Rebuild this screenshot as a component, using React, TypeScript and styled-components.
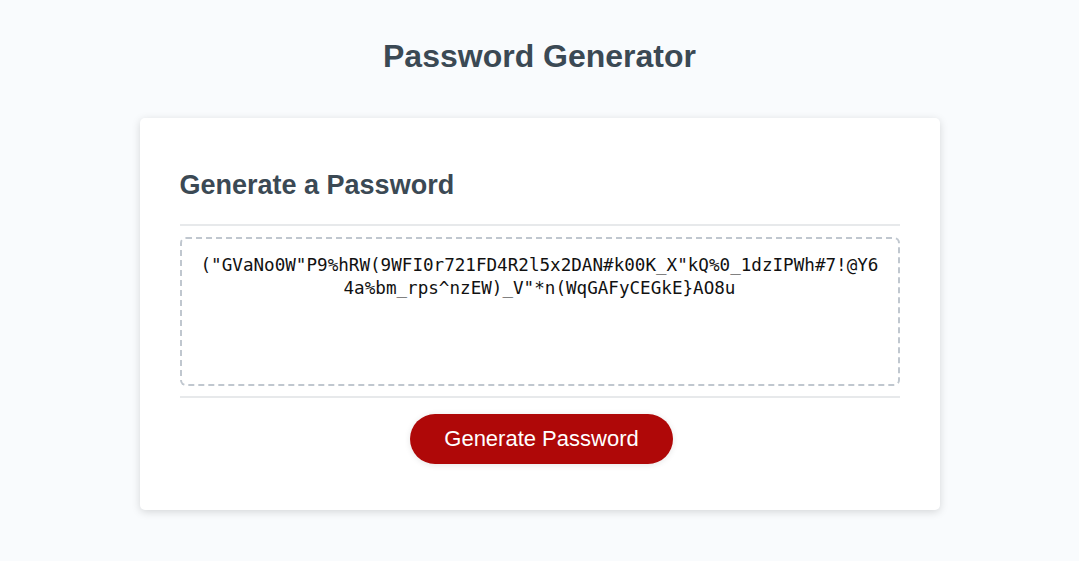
import React from "react"
import styled, { createGlobalStyle } from "styled-components"

const password =
  '("GVaNo0W"P9%hRW(9WFI0r721FD4R2l5x2DAN#k00K_X"kQ%0_1dzIPWh#7!@Y64a%bm_rps^nzEW)_V"*n(WqGAFyCEGkE}AO8u'

const GlobalStyle = createGlobalStyle`
  *, *::before, *::after {
    box-sizing: border-box;
  }

  html, body {
    margin: 0;
    padding: 0;
  }

  body {
    font-family: "Liberation Sans", Arial, sans-serif;
    background-color: #f9fbfd;
  }
`

const Wrapper = styled.div`
  padding: 38px 20px 40px;
`

const Header = styled.header`
  text-align: center;
  color: hsl(206, 17%, 28%);
`

const Title = styled.h1`
  margin: 0 0 43px;
  font-size: 32px;
  line-height: 37px;
  font-weight: 700;
`

const Card = styled.section`
  background-color: #fff;
  border-radius: 5px;
  box-shadow: rgba(0, 0, 0, 0.15) 0px 2px 8px 0px;
  color: hsl(206, 17%, 28%);
  font-size: 18px;
  margin: 0 auto;
  max-width: 800px;
  padding: 30px 40px;
`

const CardTitle = styled.h2`
  margin: 22px 0 23px;
  font-size: 27px;
  line-height: 31px;
  font-weight: 700;
`

const Divider = styled.div`
  width: 100%;
  height: 2px;
  background: #e7e9eb;
`

const PasswordBox = styled.textarea`
  appearance: none;
  display: block;
  width: 100%;
  height: 149px;
  margin: 11px 0 10px;
  padding: 15px 15px 85px;
  border: 2px dashed #c0c7cf;
  border-radius: 6px;
  font-family: "DejaVu Sans Mono", "Liberation Mono", monospace;
  font-size: 17.6px;
  line-height: 22.5px;
  color: #111;
  text-align: center;
  resize: none;
  overflow: hidden;
  outline: none;
`

const Footer = styled.div`
  text-align: center;
`

const Button = styled.button`
  border: none;
  background-color: hsl(360, 91%, 36%);
  border-radius: 25px;
  box-shadow: rgba(0, 0, 0, 0.1) 0px 1px 6px 0px;
  color: #fff;
  display: inline-block;
  font-family: inherit;
  font-size: 22px;
  line-height: 22px;
  margin: 16px 16px 16px 20px;
  padding: 14px 34px;
  cursor: pointer;
`

export default function App() {
  return (
    <>
      <GlobalStyle />
      <Wrapper>
        <Header>
          <Title>Password Generator</Title>
        </Header>
        <Card>
          <CardTitle>Generate a Password</CardTitle>
          <Divider />
          <PasswordBox readOnly rows={2} value={password} aria-label="Generated Password" />
          <Divider />
          <Footer>
            <Button>Generate Password</Button>
          </Footer>
        </Card>
      </Wrapper>
    </>
  )
}
